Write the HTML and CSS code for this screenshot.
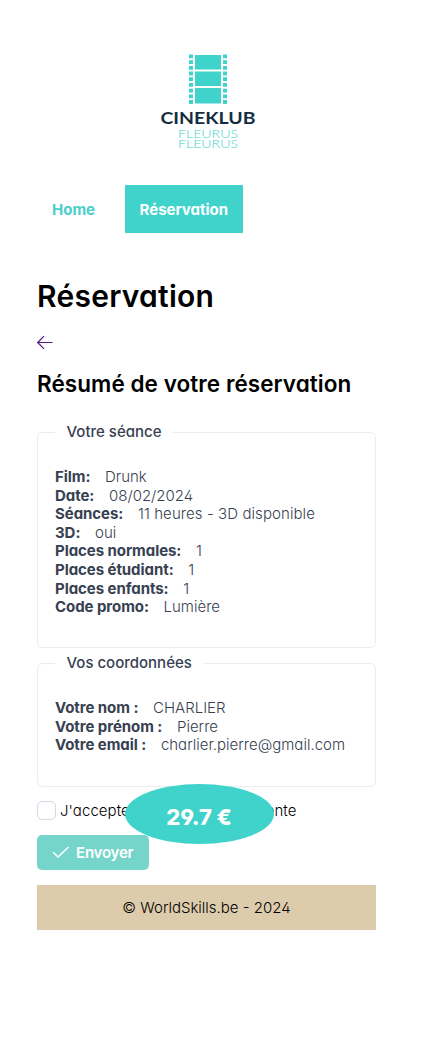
FILE: index.html
```html
<!DOCTYPE html>
<html lang="fr">
<head>
<meta charset="utf-8">
<title>Cineklub Fleurus</title>
<link rel="stylesheet" href="styles.css">
</head>
<body>
<div class="page">
  <header class="header">
    <svg class="logo" width="104" height="100" viewBox="0 0 104 100">
      <g fill="#3fd3cc">
        <path d="M38 1h26v14.500H38zM38 17.500h26v14.500H38zM38 34h26v15.500H38z"/>
        <path class="holes" d="M34 .5v50M68 .5v50"/>
      </g>
      <text class="logo-name" x="3.500" y="70" textLength="95" lengthAdjust="spacingAndGlyphs">CINEKLUB</text>
      <text class="logo-place" x="21" y="84" textLength="60" lengthAdjust="spacingAndGlyphs">FLEURUS</text>
      <text class="logo-place" x="21" y="94" textLength="60" lengthAdjust="spacingAndGlyphs">FLEURUS</text>
    </svg>
  </header>
  <nav class="nav">
    <a class="nav-link">Home</a>
    <a class="nav-link active">Réservation</a>
  </nav>
  <main>
    <h1 class="title">Réservation</h1>
    <svg class="back" width="16" height="14" viewBox="0 0 16 14"><path d="M15.500 7.500H1M7 1.200.700 7.500 7 13.800"/></svg>
    <h2 class="subtitle">Résumé de votre réservation</h2>
    <fieldset class="panel seance">
      <legend class="legend">Votre séance</legend>
      <p class="row"><strong>Film:</strong><span>Drunk</span></p>
      <p class="row"><strong>Date:</strong><span>08/02/2024</span></p>
      <p class="row"><strong>Séances:</strong><span class="session">11 heures - 3D disponible</span></p>
      <p class="row"><strong>3D:</strong><span>oui</span></p>
      <p class="row"><strong>Places normales:</strong><span>1</span></p>
      <p class="row"><strong>Places étudiant:</strong><span>1</span></p>
      <p class="row"><strong>Places enfants:</strong><span>1</span></p>
      <p class="row"><strong>Code promo:</strong><span>Lumière</span></p>
    </fieldset>
    <fieldset class="panel contact">
      <legend class="legend">Vos coordonnées</legend>
      <p class="row"><strong>Votre nom :</strong><span>CHARLIER</span></p>
      <p class="row"><strong>Votre prénom :</strong><span>Pierre</span></p>
      <p class="row"><strong>Votre email :</strong><span>charlier.pierre@gmail.com</span></p>
    </fieldset>
    <div class="accept">
      <span class="checkbox"></span>
      <label class="accept-label">J'accepte les conditions de vente</label>
      <div class="total">29.7 €</div>
    </div>
    <button class="send"><svg width="17" height="13" viewBox="0 0 17 13"><path d="M1.500 6.500 6 11 16 1.500"/></svg><span>Envoyer</span></button>
  </main>
  <footer class="footer">© WorldSkills.be - 2024</footer>
</div>
</body>
</html>
```
FILE: styles.css
```css
* { box-sizing: border-box; }
body {
  margin: 0;
  background: #fff;
  color: #000;
  font-family: Inter, "Liberation Sans", sans-serif;
  font-feature-settings: "cv02", "cv03", "cv04", "cv11";
  font-size: 15px;
  font-weight: 300;
}
.page { width: 339px; margin-left: 37px; padding-top: 54px; }
.header { display: flex; justify-content: center; height: 131px; }
.logo { display: block; margin-left: 4px; }
.holes { fill: none; stroke: #3fd3cc; stroke-width: 4; stroke-dasharray: 3.800 1.900; }
.logo-name { font: 700 17.500px Lato, sans-serif; fill: #152d43; }
.logo-place { font: 300 11.500px Lato, sans-serif; fill: #3fd3cc; }
.nav { display: flex; gap: 14.500px; height: 48px; }
.nav-link { padding: 0 15px; line-height: 49px; font-weight: 700; color: #4acfca; }
.nav-link.active { background: #3fd3cc; color: #fff; }
.title { margin: 44px 0 0; font-size: 30px; line-height: 38px; font-weight: 600; letter-spacing: .25px; }
.back { display: block; margin: 20px 0 0; fill: none; stroke: #551a8b; stroke-width: 1.200; }
.subtitle { margin: 21px 0 0; font-size: 22.500px; line-height: 28px; font-weight: 600; letter-spacing: .06px; }
.panel { margin: 0; padding: 27px 17px 0; border: 1px solid #e9ecf3; border-radius: 6px; color: #374151; }
.seance { margin-top: 25px; height: 225px; }
.contact { margin-top: 6px; height: 133px; }
.legend { padding: 0 11.500px; font-weight: 500; line-height: 18px; }
.row { display: flex; gap: 14.700px; margin: 0; line-height: 18.600px; white-space: nowrap; }
.row strong { font-weight: 700; letter-spacing: -.06px; }
.session { letter-spacing: .08px; }
.accept { position: relative; display: flex; align-items: center; gap: 4px; height: 19px; margin-top: 14px; }
.accept-label { letter-spacing: .06px; }
.checkbox { width: 19px; height: 19px; border: 1px solid #d1dae6; border-radius: 5px; }
.total { position: absolute; left: 87.500px; top: -17px; width: 149px; height: 60px; border-radius: 50%; background: #3fd3cc; color: #fff; font-size: 22px; font-weight: 800; line-height: 66px; text-align: center; }
.send { display: flex; align-items: center; gap: 7px; width: 112px; height: 35px; margin: 15px 0; padding: 0 0 0 15px; border: 0; border-radius: 5px; background: #75d5cb; color: #fff; font: inherit; font-weight: 600; letter-spacing: -.2px; }
.send path { fill: none; stroke: #fff; stroke-width: 1.500; stroke-linecap: round; stroke-linejoin: round; }
.footer { height: 45px; line-height: 46px; background: #ddccab; text-align: center; }
```
